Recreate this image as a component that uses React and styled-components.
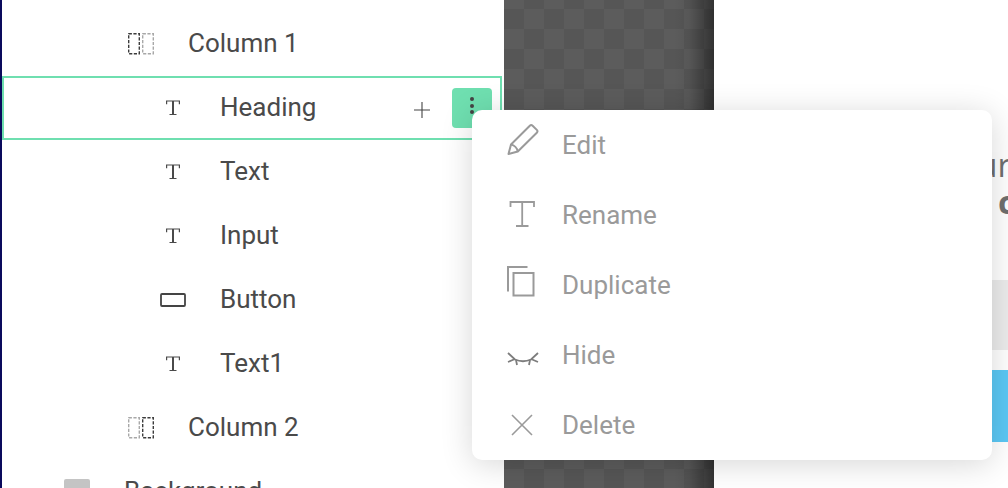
import React from "react";
import styled, { createGlobalStyle } from "styled-components";

const GlobalStyle = createGlobalStyle`
  html, body {
    margin: 0;
    padding: 0;
    background: #fff;
    overflow: hidden;
  }
`;

const layers = [
  { name: "Column 1", depth: 128, icon: "columnLeft" },
  { name: "Heading", depth: 160, icon: "text", selected: true },
  { name: "Text", depth: 160, icon: "text" },
  { name: "Input", depth: 160, icon: "text" },
  { name: "Button", depth: 160, icon: "button" },
  { name: "Text1", depth: 160, icon: "text" },
  { name: "Column 2", depth: 128, icon: "columnRight" },
  { name: "Background", depth: 64, icon: "swatch" },
];

const menuItems = [
  { label: "Edit", icon: "pencil" },
  { label: "Rename", icon: "rename" },
  { label: "Duplicate", icon: "copy" },
  { label: "Hide", icon: "eye" },
  { label: "Delete", icon: "close" },
];

const ColumnIcon = ({ active }) => (
  <svg width="26" height="22" viewBox="0 0 26 22" fill="none" strokeWidth="1.4">
    <rect x="0.7" y="0.7" width="10.600" height="20" stroke={active === 0 ? "#3c3c3c" : "#a8a8a8"} strokeDasharray="3.200 1.500" />
    <rect x="14.700" y="0.7" width="10.600" height="20" stroke={active === 1 ? "#3c3c3c" : "#a8a8a8"} strokeDasharray="3.200 1.500" />
  </svg>
);

const TextIcon = () => (
  <svg width="26" height="18" viewBox="0 0 26 18" fill="none" stroke="#4a4a4a" strokeWidth="1.200">
    <path d="M6.600 5.200V2h12.800v3.200M9.500 15.500h7" />
    <path d="M13 2v13.500" strokeWidth="2" />
  </svg>
);

const ButtonIcon = () => (
  <svg width="26" height="14" viewBox="0 0 26 14" fill="none">
    <rect x="1" y="1" width="24" height="12" rx="1" stroke="#444" strokeWidth="1.800" />
  </svg>
);

const SwatchBox = styled.span`
  display: block;
  width: 26px;
  height: 26px;
  border-radius: 2px;
  background: #c4c4c4;
`;

const layerIcons = {
  columnLeft: <ColumnIcon active={0} />,
  columnRight: <ColumnIcon active={1} />,
  text: <TextIcon />,
  button: <ButtonIcon />,
  swatch: <SwatchBox />,
};

const menuIcons = {
  pencil: (
    <svg width="32" height="32" viewBox="0 0 32 32" fill="none" stroke="#9a9a9a" strokeWidth="2" strokeLinejoin="round">
      <path d="M2.500 25l2.500-9.500L23.800-3.300a2 2 0 0 1 2.800 0l4.200 4.200a2 2 0 0 1 0 2.800L11.800 22.500z" />
      <path d="M5 15.500c3.200.5 6.100 3.500 6.800 7" />
    </svg>
  ),
  rename: (
    <svg width="32" height="32" viewBox="0 0 32 32" fill="none" stroke="#9a9a9a" strokeWidth="1.800">
      <path d="M4.500 8V3h23.500v5M16.200 3v24M10 27h12.500" />
    </svg>
  ),
  copy: (
    <svg width="32" height="32" viewBox="0 0 32 32" fill="none" stroke="#9a9a9a" strokeWidth="2">
      <path d="M2 22.500V-2h19.500" />
      <rect x="7.500" y="4" width="20" height="22.500" />
    </svg>
  ),
  eye: (
    <svg width="34" height="32" viewBox="0 0 34 32" fill="none" stroke="#7d7d7d" strokeWidth="1.800">
      <path d="M2 14l7 6.500q8 3.500 16 0l7-6.500" />
      <path d="M2 23l7-3M11 26l-1-5M23 26l1-5M32 23l-7-3" />
    </svg>
  ),
  close: (
    <svg width="32" height="32" viewBox="0 0 32 32" fill="none" stroke="#9a9a9a" strokeWidth="1.600">
      <path d="M6 6l20 20M26 6L6 26" />
    </svg>
  ),
};

export default function App() {
  return (
    <Page>
      <GlobalStyle />
      <Sidebar>
        {layers.map((layer) => (
          <LayerRow key={layer.name} $indent={layer.depth} $selected={layer.selected}>
            <LayerIcon>{layerIcons[layer.icon]}</LayerIcon>
            <LayerName>{layer.name}</LayerName>
            {layer.selected && (
              <RowActions>
                <AddButton>
                  <svg width="18" height="18" viewBox="0 0 18 18" stroke="#444" strokeWidth="1.100">
                    <path d="M9 1v16M1 9h16" />
                  </svg>
                </AddButton>
                <MoreButton>
                  <Dot />
                  <Dot />
                  <Dot />
                </MoreButton>
              </RowActions>
            )}
          </LayerRow>
        ))}
      </Sidebar>
      <Canvas />
      <Preview>
        <PreviewTitle>our</PreviewTitle>
        <PreviewStrong>c</PreviewStrong>
        <PreviewInput />
        <PreviewButton />
      </Preview>
      <Menu>
        {menuItems.map((item) => (
          <MenuItem key={item.label}>
            <MenuIcon>{menuIcons[item.icon]}</MenuIcon>
            {item.label}
          </MenuItem>
        ))}
      </Menu>
    </Page>
  );
}

const Page = styled.div`
  position: relative;
  display: flex;
  width: 1008px;
  height: 488px;
  overflow: hidden;
  background: #fff;
  font-family: Roboto, "Liberation Sans", sans-serif;
`;

const Sidebar = styled.div`
  width: 502px;
  flex: none;
  border-left: 2px solid #0a0a5c;
  padding-top: 12px;
`;

const LayerRow = styled.div`
  display: flex;
  align-items: center;
  box-sizing: border-box;
  height: 64px;
  margin-right: 2px;
  padding-left: ${(p) => p.$indent - 4}px;
  padding-right: 8px;
  border: 2px solid ${(p) => (p.$selected ? "#6fdfb0" : "transparent")};
`;

const LayerIcon = styled.span`
  display: flex;
  align-items: center;
  justify-content: center;
  width: 26px;
  flex: none;
  margin-right: 34px;
`;

const LayerName = styled.span`
  padding-bottom: 2px;
  font-size: 26px;
  color: #4a4a4a;
  white-space: nowrap;
`;

const RowActions = styled.div`
  display: flex;
  align-items: center;
  margin-left: auto;
  gap: 21px;
`;

const AddButton = styled.span`
  display: flex;
  width: 18px;
  height: 18px;
  margin-top: 4px;
`;

const MoreButton = styled.span`
  display: flex;
  flex-direction: column;
  align-items: center;
  gap: 2.600px;
  box-sizing: border-box;
  width: 40px;
  height: 40px;
  padding-top: 9px;
  border-radius: 4px;
  background: #6fdfb0;
`;

const Dot = styled.i`
  display: block;
  width: 4px;
  height: 4px;
  border-radius: 50%;
  background: #444;
`;

const Canvas = styled.div`
  width: 210px;
  flex: none;
  background:
    linear-gradient(to right, transparent 170px, rgba(0, 0, 0, 0.06) 185px, rgba(0, 0, 0, 0.45) 210px),
    conic-gradient(#5c5c5c 25%, #565656 0 50%, #5c5c5c 0 75%, #565656 0) 0 9px / 40px 40px;
`;

const Preview = styled.div`
  flex: 1;
  display: flex;
  flex-direction: column;
  padding-top: 146px;
  color: #6f6f6f;
  font-family: "Open Sans", sans-serif;
`;

const PreviewTitle = styled.div`
  height: 37px;
  padding-right: 4px;
  text-align: right;
  font-size: 33px;
  line-height: 37px;
`;

const PreviewStrong = styled.div`
  height: 97px;
  margin-left: 284px;
  font-size: 33px;
  line-height: 37px;
  font-weight: 700;
`;

const PreviewInput = styled.div`
  height: 70px;
  background: #ececec;
`;

const PreviewButton = styled.div`
  height: 72px;
  margin-top: 20px;
  background: #5bc8f5;
`;

const Menu = styled.div`
  position: absolute;
  left: 472px;
  top: 110px;
  width: 520px;
  height: 350px;
  border-radius: 10px;
  background: #fff;
  box-shadow: 0 4px 32px rgba(0, 0, 0, 0.16);
`;

const MenuItem = styled.div`
  display: flex;
  align-items: center;
  height: 70px;
  padding-left: 34px;
  font-size: 26px;
  color: #9a9a9a;
`;

const MenuIcon = styled.span`
  display: flex;
  width: 32px;
  height: 32px;
  margin-right: 24px;
  svg {
    flex: none;
    overflow: visible;
  }
`;
